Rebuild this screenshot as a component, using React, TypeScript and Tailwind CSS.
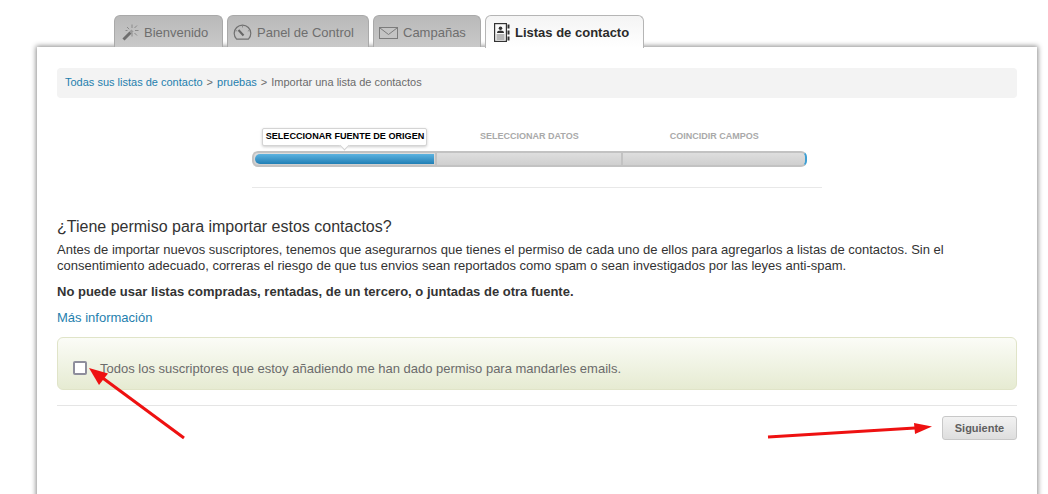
import React from "react";

const Wand = () => (
  <svg width="17" height="17" viewBox="0 0 17 17" fill="none" className="shrink-0">
    <path d="M1.5 15.5 L8.5 8.5" stroke="#6f6f6f" strokeWidth="3" />
    <path d="M8.5 8.5 L10.5 6.5" stroke="#9a9a9a" strokeWidth="3" />
    <path d="M10 0.5V4M10 9v3.5M13 6.5h3.5M5 3l2.2 2.2M15 1.5l-2.5 2.5M12.5 9l2.5 2.5M3.5 6.5h2" stroke="#8a8a8a" strokeWidth="1" />
  </svg>
);
const Gauge = () => (
  <svg width="19" height="17" viewBox="0 0 19 17" fill="none" className="shrink-0">
    <path d="M3.600 15.200 A8.300 8.300 0 1 1 15.400 15.200 Z" stroke="#707070" strokeWidth="1.200" />
    <path d="M5.500 6 L10.500 11.500" stroke="#666" strokeWidth="2" />
    <path d="M9.500 2v1.500M3 6.500l1.200.6M16 6.500l-1.200.6" stroke="#8a8a8a" strokeWidth="1" />
  </svg>
);
const Mail = () => (
  <svg width="19" height="12" viewBox="0 0 19 12" fill="none" className="shrink-0">
    <rect x="0.5" y="0.5" width="18" height="11" stroke="#7c7c7c" fill="#c4c4c4" />
    <path d="M1 1l8.500 6.500L18 1" stroke="#7c7c7c" />
  </svg>
);
const Contact = () => (
  <svg width="16" height="19" viewBox="0 0 16 19" fill="none" className="shrink-0">
    <rect x="0.6" y="0.6" width="11.8" height="17.8" stroke="#333" strokeWidth="1.2" fill="#fafafa" />
    <circle cx="6.5" cy="5.2" r="1.8" fill="#333" />
    <path d="M3 10c0-2 1.500-2.600 3.500-2.600S10 8 10 10z" fill="#333" />
    <path d="M2.500 12h8M2.500 14h8M2.500 16h8" stroke="#777" />
    <path d="M14.500 1.500v4M14.500 7.500v4M14.500 13.500v4" stroke="#333" strokeWidth="2" />
  </svg>
);

function Tab({ icon, label, width, pad }: { icon: React.ReactNode; label: string; width: string; pad: string }) {
  return (
    <div
      className={`${width} ${pad} h-[32px] flex items-center gap-[5px] pt-[2px] rounded-t-[6px] border border-b-0 border-[#a9a9a9] bg-gradient-to-b from-[#b9b9b9] to-[#c9c9c9] text-[13px] text-[#6e6e6e]`}
    >
      {icon}
      <span>{label}</span>
    </div>
  );
}

export default function App() {
  return (
    <div className="relative h-[494px] w-[1048px] overflow-hidden bg-white font-['Liberation_Sans',Arial,sans-serif] text-[#333]">
      <div className="flex h-[47px] items-end gap-[4px] pl-[114px]">
        <Tab icon={<Wand />} label="Bienvenido" width="w-[109px]" pad="pl-[7px]" />
        <Tab icon={<Gauge />} label="Panel de Control" width="w-[142px]" pad="pl-[5px]" />
        <Tab icon={<Mail />} label="Campañas" width="w-[108px]" pad="pl-[5px]" />
        <div className="relative z-10 mb-[-1px] flex h-[33px] w-[159px] items-center gap-[5px] rounded-t-[6px] border border-b-0 border-[#b5b5b5] bg-gradient-to-b from-[#f4f4f4] to-white pl-[8px] pt-[1px] text-[13px] font-bold text-[#2b2b2b]">
          <Contact />
          <span>Listas de contacto</span>
        </div>
      </div>

      <main className="ml-[37px] h-[520px] w-[1000px] bg-white px-[20px] pt-[21px] shadow-[0_0_5px_1px_rgba(0,0,0,0.45)]">
        <nav className="flex h-[30px] items-center gap-[4px] rounded-[4px] bg-[#f3f3f3] pb-[1px] pl-[8px] text-[11px] text-[#6b6b6b]">
          <span className="text-[#1f7fae]">Todas sus listas de contacto</span>
          <span>&gt;</span>
          <span className="text-[#1f7fae]">pruebas</span>
          <span>&gt;</span>
          <span>Importar una lista de contactos</span>
        </nav>

        <section className="ml-[195px] mt-[30px] h-[60px] w-[570px] border-b border-[#e8e8e8]">
          <div className="relative flex h-[18px] items-center text-[9px] font-bold text-[#a9a9a9]">
            <div className="relative z-10 ml-[10px] flex h-[18px] w-[165px] items-center justify-center rounded-[2px] border border-[#d4d4d4] bg-white pb-[1px] pl-[1px] text-[9.1px] text-black shadow-[0_1px_3px_rgba(0,0,0,0.2)]">
              SELECCIONAR FUENTE DE ORIGEN
              <span className="absolute bottom-[-4px] left-[78px] size-[7px] rotate-45 border-b border-r border-[#d4d4d4] bg-white" />
            </div>
            <span className="ml-[53px] pb-[1px]">SELECCIONAR DATOS</span>
            <span className="ml-[91px] pb-[1px]">COINCIDIR CAMPOS</span>
          </div>
          <div className="mt-[5px] flex h-[16px] w-[555px] overflow-hidden rounded-[6px] border-2 border-[#c2c2c2] border-r-[#3e9fd3] bg-gradient-to-b from-[#dedede] to-[#cfcfcf]">
            <div className="mb-[1px] ml-[1px] mt-[1px] h-[10px] w-[179px] rounded-l-[5px] bg-gradient-to-b from-[#5cb3e0] to-[#1f7fb5]" />
            <div className="ml-[1px] h-full w-[2px] bg-[#c2c2c2]" />
            <div className="w-[184px]" />
            <div className="h-full w-[2px] bg-[#c2c2c2]" />
          </div>
        </section>

        <h2 className="mt-[28px] text-[16px] leading-[22px] text-[#333]">¿Tiene permiso para importar estos contactos?</h2>
        <p className="mt-[4px] w-[960px] text-[13px] leading-[16px] text-[#333]">
          Antes de importar nuevos suscriptores, tenemos que asegurarnos que tienes el permiso de cada uno de ellos para agregarlos a listas de contactos. Sin el consentimiento adecuado, correras el riesgo de que tus envios sean reportados como spam o sean investigados por las leyes anti-spam.
        </p>
        <p className="mt-[10px] text-[13px] font-bold leading-[16px] text-[#333]">
          No puede usar listas compradas, rentadas, de un tercero, o juntadas de otra fuente.
        </p>
        <a className="mt-[10px] block text-[13px] leading-[16px] text-[#1f7fae]">Más información</a>

        <div className="mt-[11px] flex h-[53px] items-center rounded-[6px] border border-[#e0e4c8] bg-gradient-to-b from-[#fbfcf7] to-[#e6ebd2] pl-[15px] pt-[11px]">
          <span className="mb-[2px] size-[14px] rounded-[2px] border-2 border-[#8e8e9c] bg-white" />
          <span className="ml-[13px] text-[13px] text-[#6b6b6b]">Todos los suscriptores que estoy añadiendo me han dado permiso para mandarles emails.</span>
        </div>

        <div className="mt-[15px] flex justify-end border-t border-[#e5e5e5] pt-[10px]">
          <button className="h-[24px] w-[75px] rounded-[3px] border border-[#c8c8c8] bg-gradient-to-b from-[#f2f2f2] to-[#dedede] text-[11px] font-bold text-[#5f5f5f]">
            Siguiente
          </button>
        </div>
      </main>

      <svg className="pointer-events-none absolute left-0 top-0" width="1048" height="494" fill="none">
        <path d="M184 438 L100 376" stroke="#ee1111" strokeWidth="3" />
        <path d="M89 368 L108 373.500 L99 385 Z" fill="#ee1111" />
        <path d="M768 437 L915 428" stroke="#ee1111" strokeWidth="3" />
        <path d="M932 426.500 L914 423 L915 434 Z" fill="#ee1111" />
      </svg>
    </div>
  );
}
